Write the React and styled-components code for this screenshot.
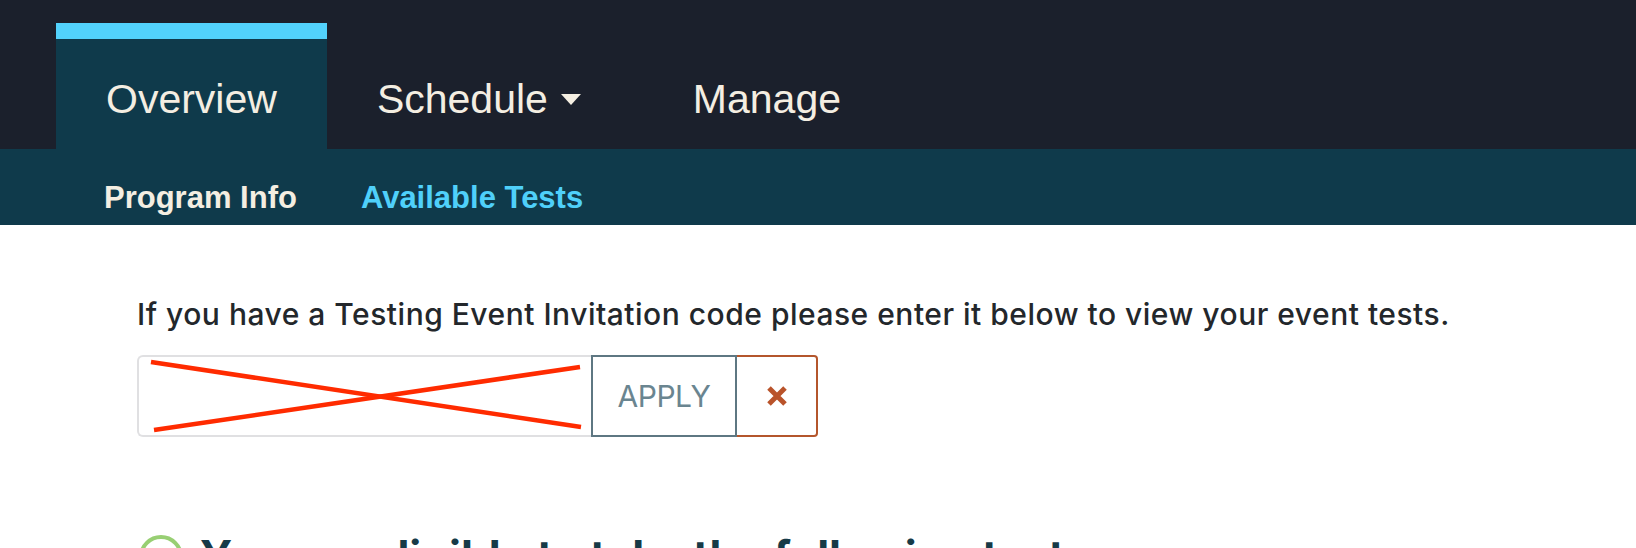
import styled, { createGlobalStyle } from 'styled-components'

const GlobalStyle = createGlobalStyle`
  body {
    margin: 0;
    background: #ffffff;
    font-family: Inter, "Liberation Sans", sans-serif;
  }
`

const Page = styled.div`
  width: 100%;
  height: 548px;
  overflow: hidden;
`

const TopBar = styled.nav`
  display: flex;
  align-items: stretch;
  height: 149px;
  padding-left: 56px;
  background: #1b202c;
  box-sizing: border-box;
`

const TopItem = styled.a`
  display: flex;
  align-items: center;
  gap: 13px;
  margin-top: 23px;
  padding: 10px 50px 0;
  border-top: 16px solid ${({ $active }) => ($active ? '#52d2fc' : 'transparent')};
  background: ${({ $active }) => ($active ? '#0f3a4b' : 'transparent')};
  color: #f4eee2;
  font-family: "Liberation Sans", Arial, sans-serif;
  font-size: 41px;
  text-decoration: none;
`

const Caret = styled.span`
  width: 0;
  height: 0;
  margin-right: 12px;
  border-left: 10px solid transparent;
  border-right: 10px solid transparent;
  border-top: 11px solid #f4eee2;
`

const SubBar = styled.div`
  display: flex;
  align-items: center;
  gap: 64px;
  height: 76px;
  padding: 22px 0 0 104px;
  background: #0f3a4b;
  box-sizing: border-box;
`

const SubLink = styled.a`
  font-family: "Liberation Sans", Arial, sans-serif;
  font-weight: 700;
  font-size: 31px;
  color: ${({ $active }) => ($active ? '#4fd0fa' : '#f4eee2')};
  text-decoration: none;
`

const Content = styled.main`
  padding: 71px 0 0 137px;
`

const Intro = styled.p`
  margin: 0 0 23px;
  font-size: 30px;
  font-weight: 500;
  letter-spacing: 0.5px;
  color: #23272b;
  line-height: 36px;
`

const CodeForm = styled.form`
  display: flex;
  height: 82px;
`

const InputWrap = styled.div`
  position: relative;
  width: 454px;
  box-sizing: border-box;
  border: 2px solid #e0e0e2;
  border-right: none;
  border-radius: 6px 0 0 6px;
`

const CodeInput = styled.input`
  width: 100%;
  height: 100%;
  border: none;
  outline: none;
  background: transparent;
  box-sizing: border-box;
`

const Redaction = styled.svg`
  position: absolute;
  left: -2px;
  top: -2px;
  pointer-events: none;
`

const ApplyButton = styled.button`
  width: 146px;
  border: 2px solid #5e7782;
  background: #ffffff;
  color: #6a8590;
  font-family: Inter, "Liberation Sans", sans-serif;
  font-size: 30px;
  letter-spacing: -0.5px;
`

const ClearButton = styled.button`
  display: flex;
  align-items: center;
  justify-content: center;
  width: 81px;
  border: 2px solid #b4562c;
  border-left: none;
  border-radius: 0 4px 4px 0;
  background: #ffffff;
  padding: 0;
`

const Eligible = styled.h2`
  display: flex;
  align-items: flex-start;
  gap: 17px;
  margin: 95px 0 0 2px;
  font-size: 44px;
  font-weight: 700;
  color: #163a47;
  line-height: 48px;
  white-space: nowrap;
`

const CheckCircle = styled.span`
  flex: none;
  width: 44px;
  height: 44px;
  margin-top: 3px;
  border: 4px solid #98cf73;
  border-radius: 50%;
  box-sizing: border-box;
`

export default function App() {
  return (
    <Page>
      <GlobalStyle />
      <TopBar>
        <TopItem $active>Overview</TopItem>
        <TopItem>
          Schedule
          <Caret />
        </TopItem>
        <TopItem>Manage</TopItem>
      </TopBar>
      <SubBar>
        <SubLink>Program Info</SubLink>
        <SubLink $active>Available Tests</SubLink>
      </SubBar>
      <Content>
        <Intro>
          If you have a Testing Event Invitation code please enter it below to view your event tests.
        </Intro>
        <CodeForm onSubmit={(e) => e.preventDefault()}>
          <InputWrap>
            <CodeInput aria-label="Invitation code" />
            <Redaction width="456" height="82" viewBox="0 0 456 82">
              <line x1="14" y1="7" x2="444" y2="72" stroke="#ff2b00" strokeWidth="4.5" />
              <line x1="17" y1="75" x2="443" y2="12" stroke="#ff2b00" strokeWidth="4.5" />
            </Redaction>
          </InputWrap>
          <ApplyButton type="submit">APPLY</ApplyButton>
          <ClearButton type="button" aria-label="Clear">
            <svg width="22" height="22" viewBox="0 0 22 22">
              <path d="M3 3 L19 19 M19 3 L3 19" stroke="#b9532a" strokeWidth="5" />
            </svg>
          </ClearButton>
        </CodeForm>
        <Eligible>
          <CheckCircle />
          You are eligible to take the following tests
        </Eligible>
      </Content>
    </Page>
  )
}
